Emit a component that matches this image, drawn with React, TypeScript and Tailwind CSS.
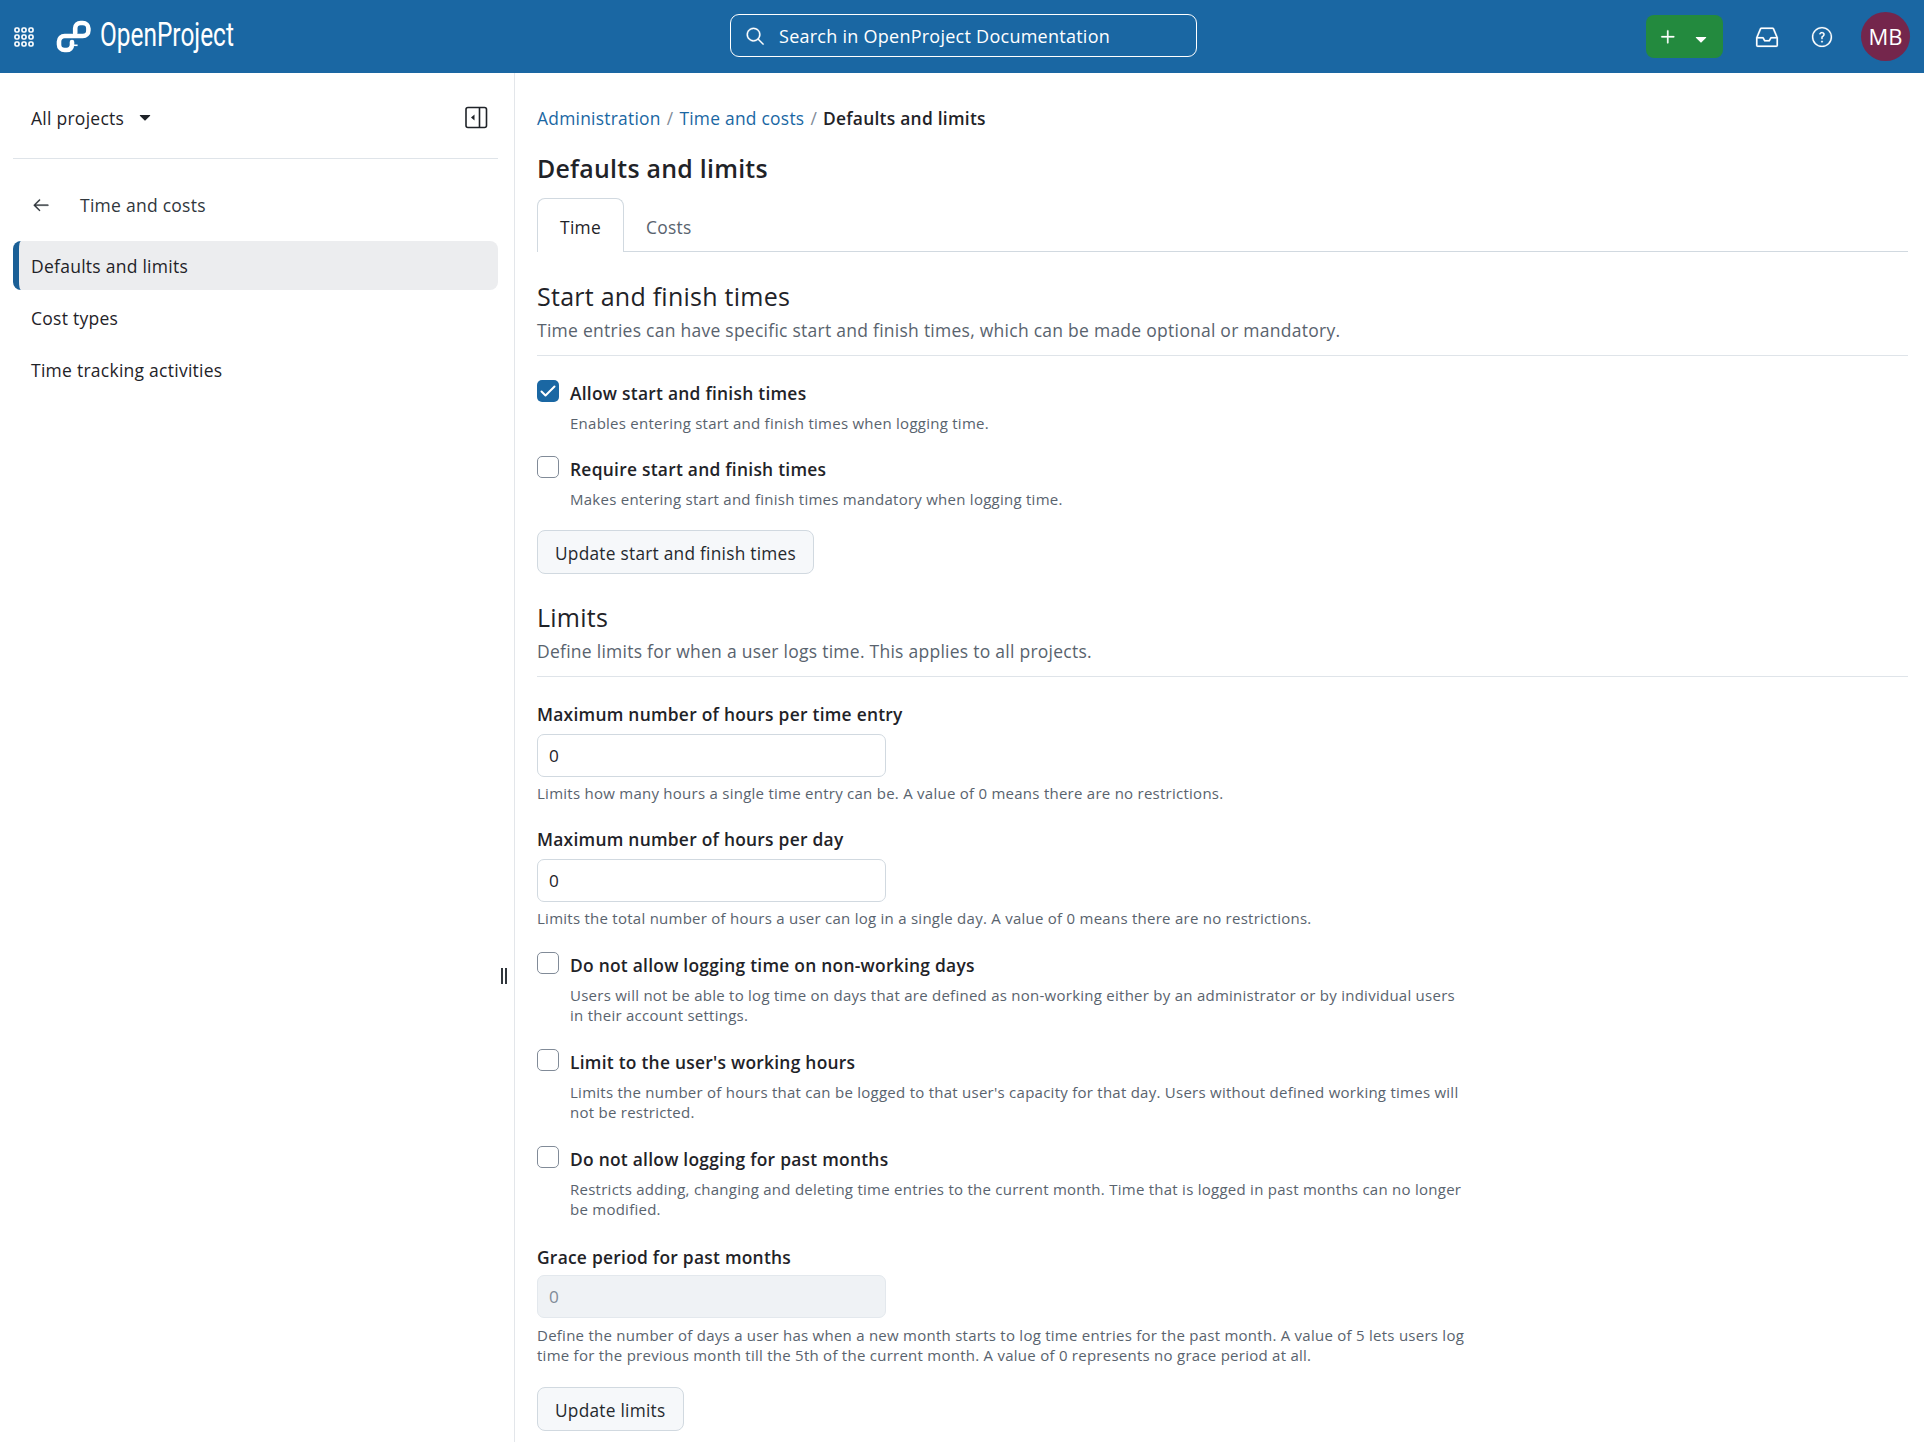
import { GoArrowLeft, GoInbox, GoPlus, GoQuestion, GoSearch, GoTriangleDown } from "react-icons/go";

const sideItems = ["Cost types", "Time tracking activities"];

function Checkbox({ checked }: { checked?: boolean }) {
  if (checked) {
    return (
      <span className="flex h-[22px] w-[22px] shrink-0 items-center justify-center rounded-[5px] bg-[#1a67a3]">
        <svg width="22" height="22" viewBox="0 0 22 22" fill="none">
          <path d="M4.5 11.5l4 4L17.5 6.5" stroke="white" strokeWidth="2" strokeLinecap="round" strokeLinejoin="round" />
        </svg>
      </span>
    );
  }
  return <span className="h-[22px] w-[22px] shrink-0 rounded-[5px] border border-[#818b98] bg-white" />;
}

function CheckRow({ label, hint, checked, className }: { label: string; hint: string; checked?: boolean; className: string }) {
  return (
    <div className={`flex gap-[11px] ${className}`}>
      <Checkbox checked={checked} />
      <div className="max-w-[900px] pb-[1px]">
        <div className="h-[26px] text-[17.4px] leading-[26px] font-semibold text-[#1f2328]">{label}</div>
        <p className="mt-[7px] text-[15px] leading-[20px] text-[#59636e]">{hint}</p>
      </div>
    </div>
  );
}

function NumberField({ label, hint, disabled, className }: { label: string; hint: string; disabled?: boolean; className: string }) {
  return (
    <div className={`pb-[1px] ${className}`}>
      <div className="h-[26px] text-[17.4px] leading-[26px] font-semibold text-[#1f2328]">{label}</div>
      <div
        className={
          disabled
            ? "mt-[5px] flex h-[43px] w-[349px] items-center rounded-[7px] border border-[#e3e8ed] bg-[#eff2f5] pl-[11px] text-[17.2px] text-[#818b98]"
            : "mt-[7px] flex h-[43px] w-[349px] items-center rounded-[7px] border border-[#d1d9e0] bg-white pl-[11px] text-[17.2px] text-[#1f2328]"
        }
      >
        0
      </div>
      <p className={disabled ? "mt-[7px] max-w-[930px] text-[15px] leading-[20px] text-[#59636e]" : "mt-[6px] max-w-[930px] text-[15px] leading-[20px] text-[#59636e]"}>{hint}</p>
    </div>
  );
}

function Button({ children, className }: { children: string; className: string }) {
  return (
    <div className={`flex h-[44px] w-fit items-center rounded-[8px] border border-[#d1d9e0] bg-[#f6f8fa] px-[17px] pt-[3px] text-[17.3px] text-[#25292e] ${className}`}>
      {children}
    </div>
  );
}

function SectionHead({ title, text, className }: { title: string; text: string; className: string }) {
  return (
    <div className={`border-b border-[#dfe4e9] ${className}`}>
      <h2 className="h-[34px] text-[25px] leading-[34px] font-normal text-[#1f2328]">{title}</h2>
      <p className="mt-[4px] h-[38px] text-[17.5px] leading-[26px] text-[#59636e]">{text}</p>
    </div>
  );
}

export default function App() {
  return (
    <div className="flex h-screen flex-col overflow-hidden bg-white font-['Open_Sans','Noto_Sans',sans-serif] tracking-[0.016em]">
      <header className="relative flex h-[73px] shrink-0 items-center bg-[#1a67a3] text-white">
        <svg className="ml-[14px]" width="20" height="20" viewBox="0 0 20 20" fill="none" stroke="white" strokeWidth="1.7">
          {[3, 10, 17].map((y) =>
            [3, 10, 17].map((x) => <rect key={`${x}-${y}`} x={x - 2} y={y - 2} width="4" height="4" rx="1.4" />),
          )}
        </svg>
        <svg className="ml-[22px]" width="36" height="34" viewBox="0 0 36 34" fill="none" stroke="white" strokeWidth="4.6" strokeLinecap="round">
          <path d="M19.2 13V8.2C19.2 5 21.6 3 24.6 3h2.2c3.2 0 5.6 2.4 5.6 5.4v2c0 3.2-2.4 5.6-5.6 5.6H8.6C5.4 16 3 18.4 3 21.4v3C3 27.6 5.4 30 8.6 30h2c3.2 0 5.4-2.2 5.4-5.4V22" />
          <path d="M19.8 24.5v1.6" strokeLinecap="butt" strokeWidth="3.6" />
        </svg>
        <span className="mb-[4px] ml-[8px] inline-block w-[134px] origin-left scale-x-[0.74] font-['Roboto',sans-serif] text-[33px] leading-none font-normal tracking-normal whitespace-nowrap">
          OpenProject
        </span>

        <div className="absolute top-[14px] left-[730px] flex h-[43px] w-[467px] items-center rounded-[9px] border border-white pl-[14px] text-white">
          <GoSearch size={20} stroke="currentColor" strokeWidth={0.4} />
          <span className="ml-[14px] pt-[1px] text-[18px]">Search in OpenProject Documentation</span>
        </div>

        <div className="ml-auto flex items-center">
          <div className="flex h-[43px] w-[77px] items-center rounded-[8px] bg-[#238a3e] pl-[11px]">
            <GoPlus size={22} stroke="currentColor" strokeWidth={0.3} />
            <GoTriangleDown size={20} className="mt-[7px] ml-[12px]" />
          </div>
          <GoInbox size={24} className="ml-[32px]" stroke="currentColor" strokeWidth={0.2} />
          <GoQuestion size={22} className="ml-[32px]" stroke="currentColor" strokeWidth={0.2} />
          <div className="mr-[14px] ml-[28px] flex h-[49px] w-[49px] items-center justify-center rounded-full bg-[#74264c] text-[22px] tracking-normal">
            MB
          </div>
        </div>
      </header>

      <div className="flex min-h-0 flex-1">
        <aside className="relative w-[515px] shrink-0 border-r border-[#e3e6ea] pt-[1px] pl-[13px] text-[#1f2328]">
          <div className="mr-[16px] flex h-[85px] items-center border-b border-[#dfe4e9] pt-[4px] pl-[18px] text-[17.5px]">
            <span>All projects</span>
            <GoTriangleDown size={20} className="ml-[11px]" />
            <svg className="mr-[10px] mb-[2px] ml-auto" width="23" height="23" viewBox="0 0 23 23" fill="none">
              <rect x="1" y="1.5" width="20.5" height="20" rx="2" stroke="#1f2328" strokeWidth="1.6" />
              <path d="M14.5 1.5v20" stroke="#1f2328" strokeWidth="1.6" />
              <path d="M9.5 8.5v6l-3.5-3z" fill="#1f2328" />
            </svg>
          </div>
          <div className="mt-[22px] flex h-[48px] items-center pl-[18px] text-[17.5px] text-[#31373d]">
            <GoArrowLeft size={20} stroke="currentColor" strokeWidth={0.3} />
            <span className="ml-[29px]">Time and costs</span>
          </div>
          <div className="mt-[12px] mr-[16px] flex h-[49px] items-center rounded-[8px] border-l-[6px] border-[#1a5f96] bg-[#ecedef] pt-[1px] pl-[12px] text-[17.5px]">
            Defaults and limits
          </div>
          <div className="mt-[2px] flex flex-col pl-[18px] text-[17.5px]">
            {sideItems.map((item) => (
              <div key={item} className="flex h-[52px] items-center">
                {item}
              </div>
            ))}
          </div>
          <div className="absolute top-[895px] right-[7px] flex gap-[2px]">
            <span className="h-[16px] w-[2px] bg-[#31373d]" />
            <span className="h-[16px] w-[2px] bg-[#31373d]" />
          </div>
        </aside>

        <main className="min-w-0 flex-1 pt-[32px] pr-[16px] pl-[22px]">
          <nav className="flex h-[26px] items-center text-[17.4px] leading-[26px]">
            <span className="text-[#1a67a3]">Administration</span>
            <span className="mx-[6px] text-[#818b98]">/</span>
            <span className="text-[#1a67a3]">Time and costs</span>
            <span className="mx-[6px] text-[#818b98]">/</span>
            <span className="font-semibold text-[#1f2328]">Defaults and limits</span>
          </nav>
          <h1 className="mt-[19px] h-[36px] text-[24.9px] leading-[36px] font-semibold text-[#1f2328]">Defaults and limits</h1>

          <div className="mt-[12px] flex h-[54px] border-b border-[#d1d9e0] text-[17.4px]">
            <div className="mb-[-1px] flex h-[54px] w-[87px] items-center justify-center rounded-t-[8px] border border-b-0 border-[#d1d9e0] bg-white pt-[4px] text-[#1f2328]">
              Time
            </div>
            <div className="ml-[22px] flex items-center pt-[5px] text-[#59636e]">Costs</div>
          </div>

          <SectionHead className="mt-[27px]" title="Start and finish times" text="Time entries can have specific start and finish times, which can be made optional or mandatory." />
          <CheckRow className="mt-[24px]" checked label="Allow start and finish times" hint="Enables entering start and finish times when logging time." />
          <CheckRow className="mt-[22px]" label="Require start and finish times" hint="Makes entering start and finish times mandatory when logging time." />
          <Button className="mt-[20px]">Update start and finish times</Button>

          <SectionHead className="mt-[26px]" title="Limits" text="Define limits for when a user logs time. This applies to all projects." />
          <NumberField className="mt-[24px]" label="Maximum number of hours per time entry" hint="Limits how many hours a single time entry can be. A value of 0 means there are no restrictions." />
          <NumberField className="mt-[22px]" label="Maximum number of hours per day" hint="Limits the total number of hours a user can log in a single day. A value of 0 means there are no restrictions." />
          <CheckRow className="mt-[23px]" label="Do not allow logging time on non-working days" hint="Users will not be able to log time on days that are defined as non-working either by an administrator or by individual users in their account settings." />
          <CheckRow className="mt-[23px]" label="Limit to the user's working hours" hint="Limits the number of hours that can be logged to that user's capacity for that day. Users without defined working times will not be restricted." />
          <CheckRow className="mt-[23px]" label="Do not allow logging for past months" hint="Restricts adding, changing and deleting time entries to the current month. Time that is logged in past months can no longer be modified." />
          <NumberField className="mt-[24px]" disabled label="Grace period for past months" hint="Define the number of days a user has when a new month starts to log time entries for the past month. A value of 5 lets users log time for the previous month till the 5th of the current month. A value of 0 represents no grace period at all." />
          <Button className="mt-[21px]">Update limits</Button>
        </main>
      </div>
    </div>
  );
}
